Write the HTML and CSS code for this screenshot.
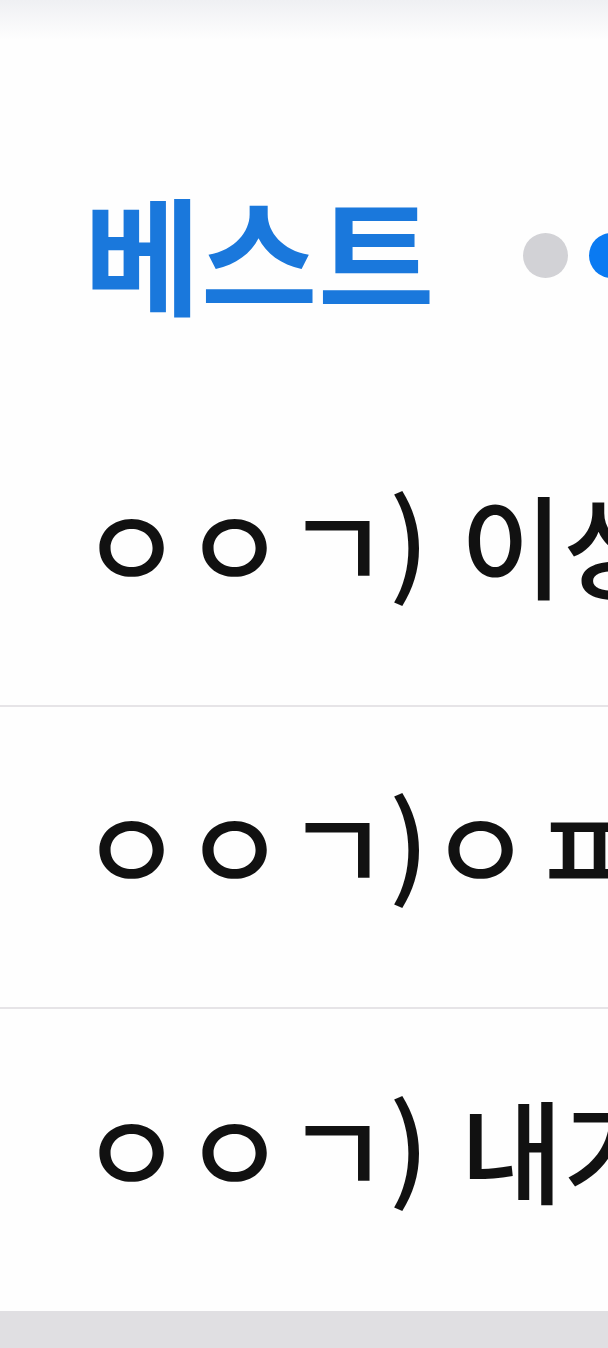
FILE: index.html
```html
<!DOCTYPE html>
<html lang="ko">
<head>
<meta charset="utf-8">
<link rel="stylesheet" href="styles.css">
</head>
<body>
<div class="page">
  <div class="top-shade"></div>
  <header class="section-head">
    <h2 class="title">베스트</h2>
    <div class="dots">
      <span class="dot"></span>
      <span class="dot active"></span>
    </div>
  </header>
  <ul class="list">
    <li class="row"><span class="row-text">ㅇㅇㄱ) 이상한 꿈 꿨다</span></li>
    <li class="row"><span class="row-text">ㅇㅇㄱ)ㅇㅍㅇ 후기</span></li>
    <li class="row"><span class="row-text">ㅇㅇㄱ) 내가 본 것</span></li>
  </ul>
  <div class="bottom-bar"></div>
</div>
</body>
</html>
```

FILE: styles.css
```css
html, body {
  margin: 0;
  padding: 0;
  background: #fefefe;
}
.page {
  width: 608px;
  height: 1348px;
  overflow: hidden;
  display: flex;
  flex-direction: column;
  background: #fefefe;
  font-family: "Noto Sans CJK KR", "Noto Sans", sans-serif;
}
.top-shade {
  height: 40px;
  flex: none;
  margin-bottom: -40px;
  background: linear-gradient(#eff0f3, rgba(254,253,254,0));
}
.section-head {
  height: 405px;
  flex: none;
  display: flex;
  align-items: center;
  padding-left: 84px;
  padding-top: 98px;
  box-sizing: border-box;
  gap: 88px;
  white-space: nowrap;
}
.title {
  margin: 0;
  font-size: 127px;
  font-weight: 700;
  line-height: 1;
  color: #1a78dc;
  letter-spacing: 0;
}
.dots {
  display: flex;
  gap: 21px;
  flex: none;
  margin-top: 8px;
}
.dot {
  width: 45px;
  height: 45px;
  border-radius: 50%;
  background: #d2d2d6;
  flex: none;
}
.dot.active {
  background: #0a7af2;
}
.list {
  list-style: none;
  margin: 0;
  padding: 0;
}
.row {
  height: 302px;
  box-sizing: border-box;
  border-bottom: 2px solid #e6e4e7;
  display: flex;
  align-items: center;
  padding-left: 80px;
  padding-bottom: 26px;
  white-space: nowrap;
  overflow: hidden;
}
.row:last-child {
  border-bottom: none;
}
.row-text {
  font-size: 112px;
  font-weight: 500;
  line-height: 1;
  color: #111;
}
.bottom-bar {
  flex: 1;
  background: #e0dfe2;
}
```
